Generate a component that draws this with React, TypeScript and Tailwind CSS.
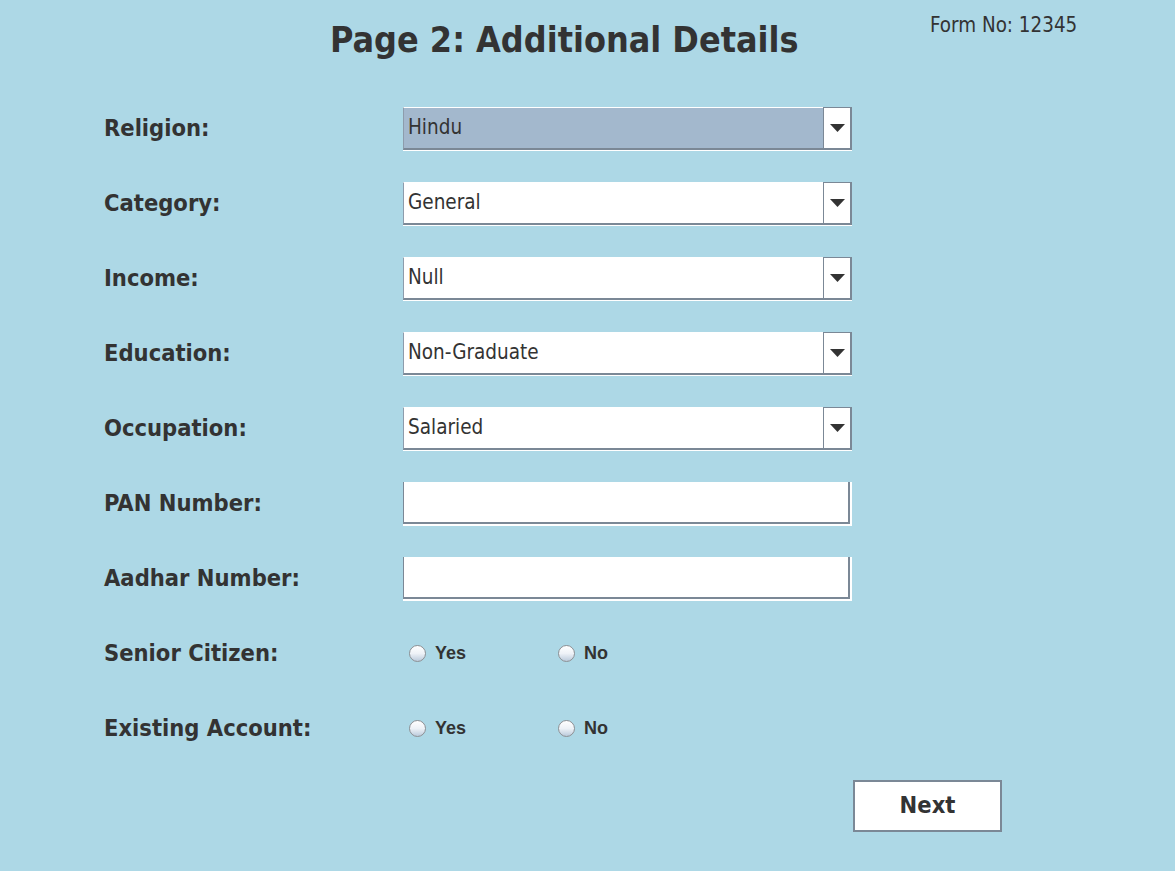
import React from "react"

const rowLabels = [
  "Religion:",
  "Category:",
  "Income:",
  "Education:",
  "Occupation:",
  "PAN Number:",
  "Aadhar Number:",
  "Senior Citizen:",
  "Existing Account:",
]

function ComboBox({ value, selected }: { value: string; selected?: boolean }) {
  return (
    <div className="flex w-[449px] h-[44px] border-b border-white">
      <div
        className={`flex-1 flex items-center pl-[4px] border-t border-white border-l border-l-[#8d9cac] border-b-2 border-b-[#7b8896] text-[20.5px] ${
          selected ? "bg-[#a3b8cd]" : "bg-white"
        }`}
      >
        {value}
      </div>
      <div className="w-[29px] bg-white border border-[#7b8896] border-r-2 border-b-2 flex items-center justify-center">
        <svg width="15" height="8" viewBox="0 0 15 8">
          <polygon points="0,0 15,0 7.5,8" fill="#333333" />
        </svg>
      </div>
    </div>
  )
}

function TextField() {
  return (
    <div className="w-[449px] h-[44px] bg-white pr-[2px] pb-[2px]">
      <div className="h-full border-l border-l-[#7b8896] border-r-2 border-b-2 border-r-[#7b8896] border-b-[#7b8896]" />
    </div>
  )
}

function Radio({ label }: { label: string }) {
  return (
    <div className="w-[149px] flex items-center gap-[9px]">
      <span className="w-[17px] h-[17px] rounded-full border border-[#8e9094] bg-gradient-to-b from-white via-[#eef2f7] to-[#bccbdc]" />
      <span className="font-['Liberation_Sans',Arial,sans-serif] font-bold text-[18px] text-[#333333]">{label}</span>
    </div>
  )
}

export default function App() {
  const combos: Record<number, { value: string; selected?: boolean }> = {
    0: { value: "Hindu", selected: true },
    1: { value: "General" },
    2: { value: "Null" },
    3: { value: "Non-Graduate" },
    4: { value: "Salaried" },
  }

  return (
    <div className="min-h-screen w-full bg-[#add8e6] text-[#333333] font-['DejaVu_Sans_Condensed','DejaVu_Sans',sans-serif] font-stretch-condensed">
      <div className="flex h-[91px] pt-[13px] pl-[330px]">
        <h1 className="w-[600px] mt-[5px] text-[35.6px] leading-[44px] font-bold">Page 2: Additional Details</h1>
        <div className="text-[20.4px] leading-[24px]">Form No: 12345</div>
      </div>

      <div className="flex flex-col pl-[104px]">
        {rowLabels.map((label, i) => (
          <div key={label} className="flex items-center h-[75px]">
            <div className="w-[299px] text-[23.5px] font-bold">{label}</div>
            {i < 5 && <ComboBox {...combos[i]} />}
            {(i === 5 || i === 6) && <TextField />}
            {i >= 7 && (
              <div className="flex pl-[6px]">
                <Radio label="Yes" />
                <Radio label="No" />
              </div>
            )}
          </div>
        ))}
      </div>

      <div className="flex pl-[853px] pt-[14px]">
        <button className="w-[149px] h-[52px] bg-white border-2 border-[#7b8896] text-[23.5px] font-bold text-[#333333]">
          Next
        </button>
      </div>
    </div>
  )
}
